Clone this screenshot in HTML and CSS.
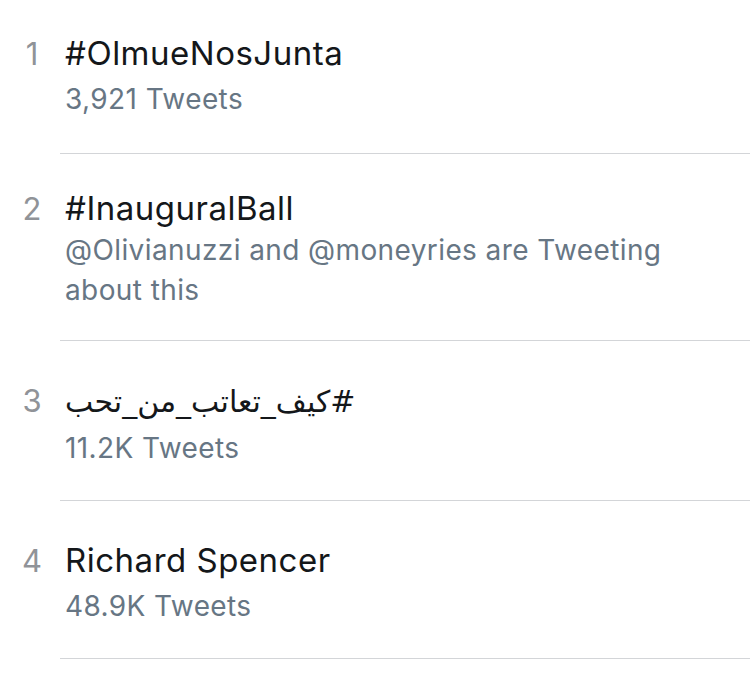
FILE: index.html
```html
<!DOCTYPE html>
<html>
<head>
<meta charset="utf-8">
<link rel="stylesheet" href="styles.css">
</head>
<body>
<ul class="trends">
  <li class="trend first">
    <span class="rank">1</span>
    <div class="body">
      <div class="title">#OlmueNosJunta</div>
      <div class="meta">3,921 Tweets</div>
    </div>
  </li>
  <li class="trend tight">
    <span class="rank">2</span>
    <div class="body">
      <div class="title">#InauguralBall</div>
      <div class="meta">@Olivianuzzi and @moneyries are Tweeting about this</div>
    </div>
  </li>
  <li class="trend">
    <span class="rank">3</span>
    <div class="body">
      <div class="title"><span class="rtl" dir="rtl">#كيف_تعاتب_من_تحب</span></div>
      <div class="meta">11.2K Tweets</div>
    </div>
  </li>
  <li class="trend">
    <span class="rank">4</span>
    <div class="body">
      <div class="title">Richard Spencer</div>
      <div class="meta">48.9K Tweets</div>
    </div>
  </li>
</ul>
</body>
</html>
```
FILE: styles.css
```css
html, body {
  margin: 0;
  padding: 0;
  background: #ffffff;
}
body {
  width: 750px;
  height: 680px;
  overflow: hidden;
  font-family: Inter, "Liberation Sans", "DejaVu Sans", sans-serif;
}
.trends {
  list-style: none;
  margin: 0;
  padding: 0;
}
.trend {
  display: grid;
  grid-template-columns: 60px 1fr;
}
.rank {
  padding-top: 40px;
  padding-left: 4px;
  text-align: center;
  font-size: 31px;
  line-height: 40px;
  color: #909398;
}
.body {
  padding: 39px 0 32px 5px;
  border-bottom: 1.5px solid #d3d5d8;
}
.title {
  font-size: 33px;
  line-height: 40px;
  letter-spacing: 0.5px;
  color: #14171a;
}
.meta {
  margin-top: 6px;
  font-size: 28px;
  line-height: 40px;
  letter-spacing: 0.4px;
  color: #677684;
  padding-right: 80px;
}
.rtl {
  display: inline-block;
  font-family: "DejaVu Sans", sans-serif;
  font-size: 30px;
  letter-spacing: 0;
}
.first .rank {
  padding-top: 34px;
}
.first .body {
  padding-top: 33px;
  padding-bottom: 34px;
}
.tight .rank {
  padding-top: 35px;
}
.tight .body {
  padding-top: 34px;
  padding-bottom: 30px;
}
.tight .meta {
  margin-top: 2px;
}
```
